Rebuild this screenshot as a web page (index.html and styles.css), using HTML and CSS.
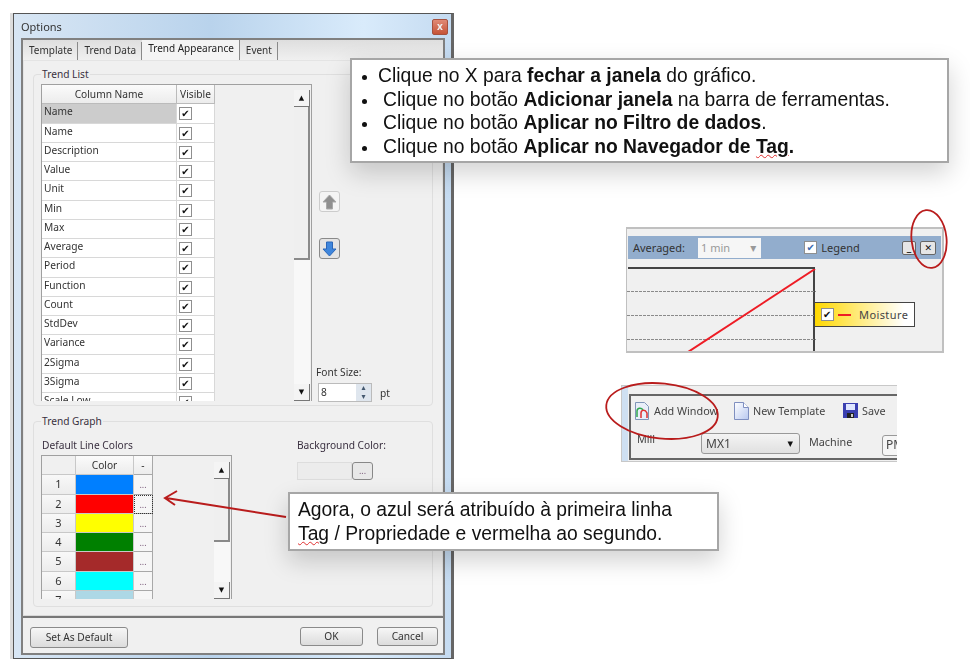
FILE: index.html
```html
<!DOCTYPE html>
<html lang="pt">
<head>
  <meta charset="UTF-8">
  <meta name="viewport" content="width=device-width, initial-scale=1.0">
  <title>Options</title>
  <link rel="stylesheet" href="styles.css">
</head>
<body>
<div class="slide">

  <!-- options dialog -->
  <div class="dialog">
    <div class="titlebar">
      <span>Options</span>
      <span class="close-btn">x</span>
    </div>
    <div class="dialog-body">
      <div class="tabs">
        <span class="tab">Template</span>
        <span class="tab">Trend Data</span>
        <span class="tab active">Trend Appearance</span>
        <span class="tab">Event</span>
      </div>
      <div class="panel">
        <div class="group list-group">
          <span class="group-title">Trend List</span>
          <div class="grid-box list-box">
            <div class="list-rows">
              <div class="list-row head"><span class="cell name">Column Name</span><span class="cell vis">Visible</span></div>
              <div class="list-row"><span class="cell name selected">Name</span><span class="cell vis"><i class="check">✔</i></span></div>
              <div class="list-row"><span class="cell name">Name</span><span class="cell vis"><i class="check">✔</i></span></div>
              <div class="list-row"><span class="cell name">Description</span><span class="cell vis"><i class="check">✔</i></span></div>
              <div class="list-row"><span class="cell name">Value</span><span class="cell vis"><i class="check">✔</i></span></div>
              <div class="list-row"><span class="cell name">Unit</span><span class="cell vis"><i class="check">✔</i></span></div>
              <div class="list-row"><span class="cell name">Min</span><span class="cell vis"><i class="check">✔</i></span></div>
              <div class="list-row"><span class="cell name">Max</span><span class="cell vis"><i class="check">✔</i></span></div>
              <div class="list-row"><span class="cell name">Average</span><span class="cell vis"><i class="check">✔</i></span></div>
              <div class="list-row"><span class="cell name">Period</span><span class="cell vis"><i class="check">✔</i></span></div>
              <div class="list-row"><span class="cell name">Function</span><span class="cell vis"><i class="check">✔</i></span></div>
              <div class="list-row"><span class="cell name">Count</span><span class="cell vis"><i class="check">✔</i></span></div>
              <div class="list-row"><span class="cell name">StdDev</span><span class="cell vis"><i class="check">✔</i></span></div>
              <div class="list-row"><span class="cell name">Variance</span><span class="cell vis"><i class="check">✔</i></span></div>
              <div class="list-row"><span class="cell name">2Sigma</span><span class="cell vis"><i class="check">✔</i></span></div>
              <div class="list-row"><span class="cell name">3Sigma</span><span class="cell vis"><i class="check">✔</i></span></div>
              <div class="list-row"><span class="cell name">Scale Low</span><span class="cell vis"><i class="check">✔</i></span></div>
            </div>
            <div class="scrollbar list-scroll">
              <span class="sb-btn">▲</span>
              <span class="sb-thumb"></span>
              <span class="sb-track"></span>
              <span class="sb-btn">▼</span>
            </div>
          </div>
          <div class="side">
            <span class="move-btn">
              <svg width="15" height="16" viewBox="0 0 15 16"><path d="M7.5 1 14 8H10.5V15H4.5V8H1Z" fill="#8f8f8f" stroke="#a8a8a8"/></svg>
            </span>
            <span class="move-btn down">
              <svg width="15" height="16" viewBox="0 0 15 16"><path d="M4.5 1H10.5V8H14L7.5 15 1 8H4.5Z" fill="#3f86dc" stroke="#2a66b8"/></svg>
            </span>
            <div class="font-size">
              <span>Font Size:</span>
              <div class="font-row">
                <div class="spin"><span class="spin-val">8</span><span class="spin-btns"><b>▴</b><b>▾</b></span></div>
                <span>pt</span>
              </div>
            </div>
          </div>
        </div>

        <div class="group graph-group">
          <span class="group-title">Trend Graph</span>
          <div class="colors">
            <span class="colors-label">Default Line Colors</span>
            <div class="grid-box color-box">
              <div class="color-rows">
                <div class="color-row head"><span class="num"></span><span class="swatch">Color</span><span class="dots">-</span></div>
                <div class="color-row"><span class="num">1</span><span class="swatch blue"></span><span class="dots">...</span></div>
                <div class="color-row"><span class="num">2</span><span class="swatch red"></span><span class="dots focus">...</span></div>
                <div class="color-row"><span class="num">3</span><span class="swatch yellow"></span><span class="dots">...</span></div>
                <div class="color-row"><span class="num">4</span><span class="swatch green"></span><span class="dots">...</span></div>
                <div class="color-row"><span class="num">5</span><span class="swatch brown"></span><span class="dots">...</span></div>
                <div class="color-row"><span class="num">6</span><span class="swatch cyan"></span><span class="dots">...</span></div>
                <div class="color-row"><span class="num">7</span><span class="swatch pale"></span><span class="dots">...</span></div>
              </div>
              <div class="scrollbar color-scroll">
                <span class="sb-btn">▲</span>
                <span class="sb-thumb"></span>
                <span class="sb-track"></span>
                <span class="sb-btn">▼</span>
              </div>
            </div>
          </div>
          <div class="bg-color">
            <span>Background Color:</span>
            <div class="bg-row"><span class="bg-field"></span><span class="bg-btn">...</span></div>
          </div>
        </div>
      </div>
      <div class="footer">
        <span class="btn default-btn">Set As Default</span>
        <span class="footer-right">
          <span class="btn ok-btn">OK</span>
          <span class="btn cancel-btn">Cancel</span>
        </span>
      </div>
    </div>
  </div>

  <!-- chart window crop -->
  <div class="chart-crop">
    <div class="chart-bar">
      <span class="avg-label">Averaged:</span>
      <span class="avg-select"><span>1 min</span><i>▾</i></span>
      <span class="legend-toggle"><i class="check blue-check">✔</i>Legend</span>
      <span class="win-btn min">_</span>
      <span class="win-btn close">✕</span>
    </div>
    <div class="plot">
      <svg width="189" height="85" viewBox="0 0 189 85">
        <path d="M0 22.5H189M0 46.5H189M0 70.5H189" stroke="#8a8a8a" stroke-dasharray="3 1" fill="none"/>
        <path d="M61 83 188 0" stroke="#ee1c25" stroke-width="2" fill="none"/>
      </svg>
      <div class="legend-tag">
        <i class="check">✔</i>
        <span class="legend-dash"></span>
        <span>Moisture</span>
      </div>
    </div>
  </div>

  <!-- toolbar crop -->
  <div class="toolbar-crop">
    <div class="toolbar-inner">
      <div class="tool-row">
        <span class="tool add">
          <svg width="16" height="18" viewBox="0 0 16 18"><path d="M1.500 .5H10.500L14.500 4.500V17.500H1.500Z" fill="#e8eef8" stroke="#7f95b8"/><path d="M3 15V9C3 6 7 5 9 8" stroke="#2fa84f" stroke-width="1.500" fill="none"/><path d="M7 16V11C7 8 11 7 13 11V16" stroke="#e03030" stroke-width="1.500" fill="none"/></svg>
          Add Window
        </span>
        <span class="tool new">
          <svg width="15" height="18" viewBox="0 0 15 18"><defs><linearGradient id="pg" x1="0" y1="0" x2="1" y2="1"><stop offset="0" stop-color="#fff"/><stop offset="1" stop-color="#b8c8f0"/></linearGradient></defs><path d="M.5 .5H9.500L14.500 5.500V17.500H.5Z" fill="url(#pg)" stroke="#7f8fc0"/><path d="M9.500 .5V5.500H14.500" fill="#fff" stroke="#7f8fc0"/></svg>
          New Template
        </span>
        <span class="tool">
          <svg width="15" height="15" viewBox="0 0 15 15"><path d="M0 0H15V15H0Z" fill="#3a3fb0"/><path d="M3 1H12V7H3Z" fill="#dfe6ff"/><path d="M4 10H11V15H4Z" fill="#222"/><path d="M8 11H10V14H8Z" fill="#ccc"/></svg>
          Save
        </span>
      </div>
      <div class="tool-row second">
        <span class="mill">Mill</span>
        <span class="mill-select"><span>MX1</span><i>▾</i></span>
        <span class="machine">Machine</span>
        <span class="pm">PM</span>
      </div>
    </div>
  </div>

  <!-- annotations -->
  <svg class="marks" width="970" height="660" viewBox="0 0 970 660">
    <ellipse cx="929" cy="239" rx="17.500" ry="29" transform="rotate(-6 929 239)" fill="none" stroke="#b91c1c" stroke-width="1.800"/>
    <ellipse cx="662" cy="411" rx="56" ry="27.500" transform="rotate(6 662 411)" fill="none" stroke="#b91c1c" stroke-width="1.800"/>
    <path d="M286 517 166 498M177 491 165 498 175 505" fill="none" stroke="#b91c1c" stroke-width="2"/>
  </svg>

  <!-- callouts -->
  <ul class="callout steps">
    <li><span>Clique no X para <b>fechar a janela</b> do gráfico.</span></li>
    <li class="shifted"><span>Clique no botão <b>Adicionar janela</b> na barra de ferramentas.</span></li>
    <li class="shifted"><span>Clique no botão <b>Aplicar no Filtro de dados</b>.</span></li>
    <li class="shifted"><span>Clique no botão <b>Aplicar no Navegador de <u>Tag</u>.</b></span></li>
  </ul>
  <div class="callout note">Agora, o azul será atribuído à primeira linha<br><u>Tag</u> / Propriedade e vermelha ao segundo.</div>
</div>
</body>
</html>
```

FILE: styles.css
```css
* {
  box-sizing: border-box;
}

body {
  margin: 0;
  background-color: #fff;
  font-family: "Noto Sans", sans-serif;
  font-size: 10.2px;
  color: #333;
}

i {
  font-style: normal;
}

.slide {
  position: relative;
  width: 970px;
  height: 660px;
  overflow: hidden;
  filter: blur(.35px);
}

/* dialog */
.dialog {
  position: absolute;
  left: 13px;
  top: 13px;
  width: 441px;
  height: 646px;
  padding: 0 6px 3px 7px;
  display: flex;
  flex-direction: column;
  border: 1px solid #555;
  border-right: 3px solid #666;
  background: linear-gradient(90deg, #d8e6f4, #b9d3ec 45%, #d9ebfb 80%, #c5dbf1);
  box-shadow: -3px 0 0 #ddd;
}

.titlebar {
  height: 24px;
  display: flex;
  justify-content: space-between;
  align-items: center;
  font-size: 11px;
  color: #333;
}

.close-btn {
  width: 16px;
  height: 16px;
  margin: 2px -3px 0 0;
  background: linear-gradient(#e08a76, #c65438);
  border: 1px solid #a5513f;
  border-radius: 2px;
  color: #eee;
  font-size: 10px;
  font-weight: bold;
  line-height: 12px;
  text-align: center;
}

.dialog-body {
  flex: 1;
  display: flex;
  flex-direction: column;
  background-color: #f0f0f0;
  border: 2px solid #808080;
}

.tabs {
  height: 20px;
  padding-top: 2px;
  display: flex;
  background: linear-gradient(#dedede, #f0f0f0);
}

.tab {
  height: 18px;
  padding: 0 5px 0 6px;
  border-right: 1px solid #8a8a8a;
  line-height: 16px;
  font-size: 10px;
}

.tab.active {
  height: 20px;
  margin-top: -2px;
  padding-top: 0;
  background-color: #f4f4f4;
  color: #222;
}

.panel {
  height: 556px;
  padding: 13px 0 0 9px;
  border: 1px solid #e4e4e4;
  border-bottom-color: #d8d8d8;
}

.group {
  position: relative;
  width: 400px;
  border: 1px solid #dfdfdf;
  border-radius: 4px;
}

.group-title {
  position: absolute;
  left: 7px;
  top: -8px;
  padding: 0 1px;
  background-color: #f0f0f0;
  line-height: 14px;
  color: #3a3040;
}

.list-group {
  height: 332px;
  padding: 9px 0 0 7px;
  display: flex;
  gap: 7px;
}

.grid-box {
  display: flex;
  justify-content: space-between;
  overflow: hidden;
  border: 1px solid #a0a0a0;
  border-bottom: none;
}

.list-box {
  width: 271px;
  height: 317px;
  padding-right: 1px;
}

.list-row {
  display: flex;
  height: 19.250px;
}

.cell {
  display: block;
  border-right: 1px solid #d8d8d8;
  border-bottom: 1px solid #d8d8d8;
  background-color: #fff;
  padding-left: 2px;
  line-height: 14px;
}

.cell.name {
  width: 135px;
}

.cell.vis {
  width: 38px;
  padding: 3px 0 0 2px;
}

.cell.selected {
  background-color: #ccc;
}

.list-row.head .cell {
  background: linear-gradient(#fbfbfb, #ececec);
  border-color: #bbb;
  line-height: 19px;
  text-align: center;
  padding: 0;
}

.check {
  display: block;
  width: 13px;
  height: 13px;
  border: 1px solid #8f8f8f;
  background-color: #fff;
  color: #111;
  font-family: "DejaVu Sans", sans-serif;
  font-size: 10px;
  line-height: 11px;
  text-align: center;
}

.scrollbar {
  display: flex;
  flex-direction: column;
  width: 16px;
  background-color: #f4f4f4;
}

.list-scroll {
  margin-top: 5px;
}

.sb-btn {
  height: 17px;
  background-color: #f4f4f4;
  border-right: 1px solid #777;
  border-bottom: 1px solid #777;
  color: #111;
  font-family: "DejaVu Sans", sans-serif;
  font-size: 7px;
  line-height: 16px;
  text-align: center;
}

.sb-thumb {
  background-color: #efefef;
  border-right: 2px solid #8a8a8a;
  border-bottom: 2px solid #8a8a8a;
}

.list-scroll .sb-thumb {
  height: 153px;
}

.sb-track {
  flex: 1;
  background-color: #f8f8f8;
}

.side {
  display: flex;
  flex-direction: column;
  align-items: flex-start;
  padding-top: 107px;
}

.move-btn {
  width: 21px;
  height: 21px;
  display: flex;
  align-items: center;
  justify-content: center;
  border: 1px solid #ccc;
  border-radius: 3px;
  background-color: #f4f4f4;
}

.move-btn.down {
  margin-top: 26px;
  border-color: #8a8a8a;
  background-color: #e4e4e4;
}

.font-size {
  margin-top: 106px;
  margin-left: -3px;
  line-height: 14px;
}

.font-row {
  display: flex;
  align-items: center;
  gap: 8px;
  margin: 4px 0 0 2px;
}

.spin {
  width: 54px;
  height: 19px;
  display: flex;
  justify-content: space-between;
  border: 1px solid #bbb;
  background-color: #fff;
}

.spin-val {
  padding-left: 2px;
  line-height: 17px;
}

.spin-btns {
  width: 15px;
  display: flex;
  flex-direction: column;
  background-color: #dfe6ee;
  color: #44586f;
}

.spin-btns b {
  height: 8.500px;
  font-family: "DejaVu Sans", sans-serif;
  font-size: 8px;
  line-height: 8px;
  text-align: center;
}

.graph-group {
  height: 186px;
  margin-top: 15px;
  padding: 16px 0 0 7px;
  display: flex;
}

.colors {
  width: 256px;
  display: flex;
  flex-direction: column;
}

.colors-label {
  padding-left: 1px;
  line-height: 14px;
  color: #3a3040;
}

.color-box {
  width: 191px;
  height: 144px;
  margin-top: 3px;
  padding-right: 1px;
}

.color-row {
  display: flex;
  height: 19.250px;
}

.color-row span {
  border-right: 1px solid #c8c8c8;
  border-bottom: 1px solid #c8c8c8;
  text-align: center;
  line-height: 18px;
}

.num {
  width: 34px;
  background: linear-gradient(#f8f8f8, #ececec);
  font-size: 11px;
}

.swatch {
  width: 58px;
}

.color-row .dots {
  width: 19px;
  background-color: #f6f6f6;
  border-color: #a8a8a8;
  color: #7a5a7a;
  font-size: 9px;
  line-height: 20px;
}

.color-row .dots.focus {
  outline: 1px dotted #333;
  outline-offset: -1px;
}

.color-row.head span {
  background: linear-gradient(#fbfbfb, #ececec);
  color: #333;
  font-size: 10.200px;
  line-height: 18px;
}

.color-row.head .num {
  background: #f0f0f0;
}

.blue { background-color: #007fff; }
.red { background-color: #f00; }
.yellow { background-color: #ff0; }
.green { background-color: #008000; }
.brown { background-color: #a52a2a; }
.cyan { background-color: #0ff; }
.pale { background-color: #add8e6; }

.color-scroll {
  margin-top: 6px;
}

.color-scroll .sb-thumb {
  height: 63px;
}

.bg-color {
  line-height: 14px;
  color: #3a3040;
}

.bg-row {
  display: flex;
  margin-top: 10px;
}

.bg-field {
  width: 55px;
  height: 18px;
  border: 1px solid #ddd;
  background-color: #ececec;
}

.bg-btn {
  width: 21px;
  height: 18px;
  border: 1px solid #888;
  border-radius: 3px;
  background-color: #e8e8e8;
  color: #7a5a7a;
  font-size: 9px;
  line-height: 16px;
  text-align: center;
}

.footer {
  flex: 1;
  padding: 9px 5px 0 7px;
  display: flex;
  justify-content: space-between;
  align-items: flex-start;
  border-top: 2px solid #777;
  background-color: #f0f0f0;
}

.footer-right {
  display: flex;
  gap: 14px;
}

.btn {
  height: 19px;
  border: 1px solid #8a8a8a;
  border-radius: 3px;
  background: linear-gradient(#f6f6f6, #dcdcdc);
  line-height: 17px;
  text-align: center;
}

.default-btn {
  width: 98px;
  height: 21px;
  line-height: 19px;
}

.ok-btn {
  width: 63px;
}

.cancel-btn {
  width: 61px;
}

/* chart crop */
.chart-crop {
  position: absolute;
  left: 626px;
  top: 227px;
  width: 318px;
  height: 126px;
  padding: 7px 0 0 1px;
  overflow: hidden;
  border: 2px solid #c0c0c0;
  border-left-width: 1px;
  border-right-width: 2px;
  background-color: #f0f0f0;
}

.chart-bar {
  width: 313px;
  height: 23px;
  padding: 0 5px;
  display: flex;
  align-items: center;
  background-color: #92adcd;
  font-size: 11px;
  color: #333;
}

.avg-select {
  width: 65px;
  height: 20px;
  margin-left: 13px;
  padding: 0 5px 0 3px;
  display: flex;
  justify-content: space-between;
  align-items: center;
  background-color: #f6f6f6;
  color: #999;
}

.avg-select i {
  font-family: "DejaVu Sans", sans-serif;
  font-size: 12px;
}

.legend-toggle {
  display: flex;
  align-items: center;
  gap: 4px;
  margin-left: 43px;
}

.blue-check {
  color: #3a6ab0;
}

.win-btn {
  width: 15px;
  height: 14px;
  margin-left: 4px;
  border: 1px solid #666;
  border-radius: 2px;
  background-color: #e6e6e6;
  color: #111;
  font-family: "DejaVu Sans", sans-serif;
  font-size: 9px;
  font-weight: bold;
  line-height: 12px;
  text-align: center;
}

.win-btn.min {
  margin-left: 42px;
}

.win-btn.close {
  width: 16px;
}

.plot {
  position: relative;
  width: 187px;
  height: 90px;
  margin-top: 8px;
  border-top: 2px solid #444;
  border-right: 2px solid #444;
}

.plot svg {
  display: block;
  margin-left: -1px;
}

.legend-tag {
  position: absolute;
  left: 187px;
  top: 33px;
  width: 100px;
  height: 25px;
  padding-left: 6px;
  display: flex;
  align-items: center;
  gap: 4px;
  border: 1px solid #444;
  border-left: none;
  background: linear-gradient(90deg, #ffd800, #fff 90%);
  font-size: 11px;
  letter-spacing: .4px;
  color: #444;
}

.legend-dash {
  width: 13px;
  height: 2px;
  margin-right: 4px;
  background-color: #ee1c25;
}

/* toolbar crop */
.toolbar-crop {
  position: absolute;
  left: 621px;
  top: 385px;
  width: 276px;
  height: 77px;
  padding: 8px 0 1px 7px;
  border: 1px solid #c8c8c8;
  border-right: none;
  background: linear-gradient(90deg, #cfe0f2 6px, #f0f0f0 6px);
}

.toolbar-inner {
  height: 100%;
  overflow: hidden;
  border: 2px solid #666;
  border-right: none;
  background-color: #f0f0f0;
  font-size: 10.800px;
  color: #444;
}

.tool-row {
  display: flex;
  align-items: center;
  height: 29px;
  padding-left: 3px;
}

.tool {
  flex: none;
  display: flex;
  align-items: center;
  gap: 4px;
}

.tool.add {
  width: 100px;
}

.tool.new {
  width: 109px;
}

.tool-row.second {
  height: 36px;
  padding-left: 6px;
  align-items: flex-start;
}

.mill {
  flex: none;
  width: 64px;
  margin-top: 6px;
}

.mill-select {
  flex: none;
  width: 99px;
  height: 21px;
  margin-top: 8px;
  padding: 0 6px 0 4px;
  display: flex;
  justify-content: space-between;
  align-items: center;
  border: 1px solid #999;
  border-radius: 3px;
  background: linear-gradient(#f4f4f4, #e0e0e0);
  font-size: 12px;
}

.mill-select i {
  font-family: "DejaVu Sans", sans-serif;
  font-size: 11px;
  color: #111;
}

.machine {
  flex: none;
  width: 73px;
  margin: 9px 0 0 9px;
}

.pm {
  flex: none;
  width: 30px;
  height: 21px;
  margin-top: 10px;
  padding-left: 3px;
  border: 1px solid #999;
  border-radius: 3px;
  background-color: #f6f6f6;
  font-size: 12px;
}

/* annotations */
.marks {
  position: absolute;
  left: 0;
  top: 0;
  pointer-events: none;
}

.callout {
  position: absolute;
  margin: 0;
  border: 2px solid #a6a6a6;
  background-color: #fff;
  box-shadow: 0 10px 24px rgba(0, 0, 0, .18);
  font-family: "Liberation Sans", Arial, sans-serif;
  color: #111;
}

.steps {
  left: 350px;
  top: 58px;
  width: 599px;
  height: 105px;
  padding: 4px 0 0 26px;
  font-size: 19.300px;
  line-height: 23.500px;
  list-style: disc;
}

.steps li::marker {
  font-size: 15px;
}

.steps li.shifted span {
  margin-left: 5px;
}

.steps u,
.note u {
  text-decoration: underline wavy #e03030 1px;
}

.note {
  left: 288px;
  top: 492px;
  width: 431px;
  height: 59px;
  padding: 4px 0 0 8px;
  font-size: 19.300px;
  line-height: 24px;
}
```
